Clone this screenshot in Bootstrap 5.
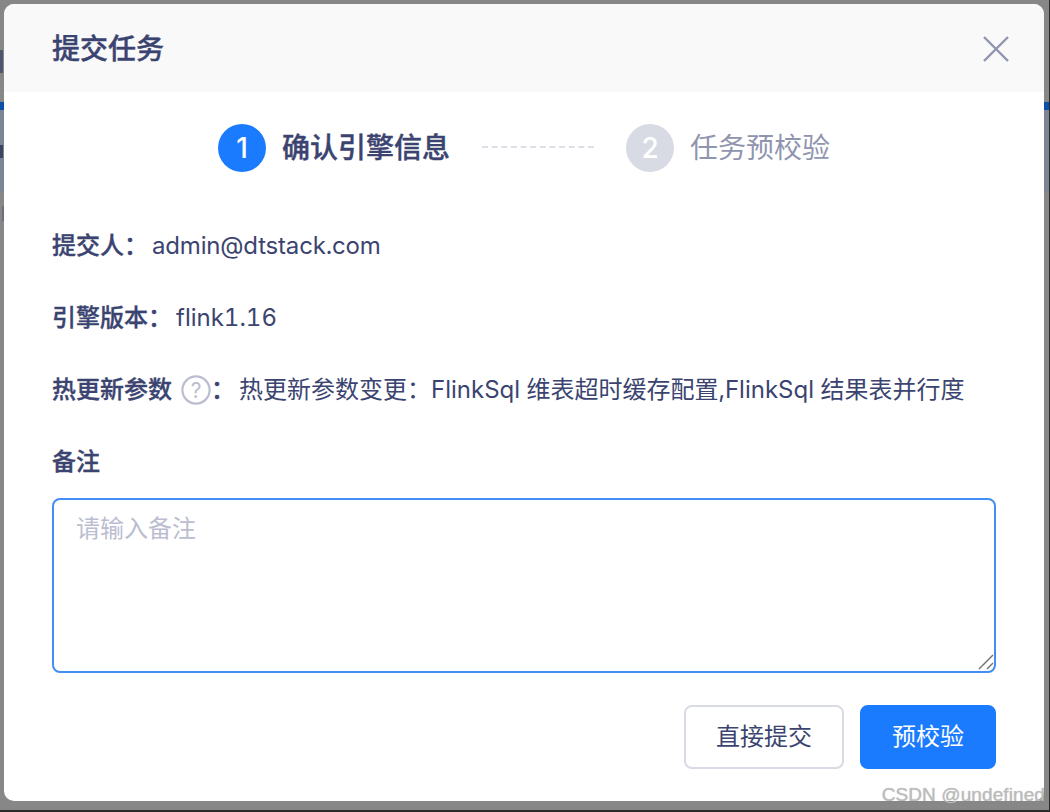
<!doctype html>
<html lang="zh">
<head>
<meta charset="utf-8">
<link href="https://cdn.jsdelivr.net/npm/bootstrap@5.3.0/dist/css/bootstrap.min.css" rel="stylesheet">
<style>
html,body{height:812px;overflow:hidden}
body{background:#878787;font-family:Inter,"Noto Sans CJK SC",sans-serif;color:#3b4470;font-size:24px;position:relative}
.back-blue{position:absolute;left:0;right:0;top:102px;height:8px;background:#0d4ea6}
.back-panel{position:absolute;left:0;right:0;top:110px;height:82px;background:#7b8594}
.back-glyph{position:absolute;background:#4f5670;width:3px}
.glyph-a{left:0;top:50px;height:23px}
.glyph-b{left:0;top:145px;height:13px;background:#3c4560}
.glyph-c{left:2px;top:206px;height:15px;background:#6c6f82}
.edge-line{position:absolute;left:0;right:0;bottom:0;height:2px;background:#2b2b2b}
.edge-side{position:absolute;right:0;top:0;bottom:0;width:1px;background:#2b2b2b}
.dialog-box{position:absolute;left:4px;top:4px;width:1040px;height:797px;background:#fff;border-radius:10px;overflow:hidden;display:flex;flex-direction:column}
.dialog-head{height:88px;background:#f9f9f9;padding:0 34px 0 48px;flex:none}
.dialog-title{font-size:28px;font-weight:500;line-height:1;margin:2px 0 0;color:#3b4470;-webkit-text-stroke:.4px #3b4470}
.close-x{width:28px;height:28px;display:block;background:none;border:0;padding:0;margin-top:2px}
.close-x svg{display:block}
.dialog-main{padding:32px 48px 0;flex:1;display:flex;flex-direction:column}
.step-row{height:48px;margin-bottom:50px;padding-left:166px}
.step-dot{width:48px;height:48px;border-radius:50%;background:#1a7bff;color:#fff;font-size:28px;font-weight:500;flex:none}
.step-dot-off{background:#d8dbe3}
.step-name{font-size:28px;font-weight:500;margin-left:16px;line-height:48px;white-space:nowrap;-webkit-text-stroke:.4px #3b4470}
.step-off{font-weight:400;color:#9095af;-webkit-text-stroke:0}
.step-dash{width:112px;border-top:2px dashed #dcdfe6;margin:0 32px 3px;height:0}
.info-row{height:48px;line-height:48px;margin-bottom:24px;white-space:nowrap;font-variant-numeric:tabular-nums}
.info-key{font-weight:500;-webkit-text-stroke:.35px #3b4470}
.key-gap{margin-right:4px}
.tight-text{letter-spacing:-.18px}
.help-mark{width:30px;height:30px;display:block;margin:0 0 0 9px;flex:none}
.note-label{font-weight:500;line-height:48px;margin-bottom:12px;font-size:24px;color:#3b4470;-webkit-text-stroke:.35px #3b4470}
.note-wrap{position:relative}
.note-area{height:175px;border:2px solid #438ef4;border-radius:8px;padding:11px 22px;font-size:24px;line-height:36px;color:#3b4470;box-shadow:none;resize:none;display:block}
.note-area::placeholder{color:#bbbdd0}
.note-area:focus{border-color:#438ef4;box-shadow:none}
.grip-mark{position:absolute;right:2px;bottom:3px;width:16px;height:16px;display:block}
.btn-row{margin-top:32px;gap:16px}
.act-btn{height:64px;font-size:24px;border-radius:8px;padding:0 30px;line-height:1}
.act-plain{background:#fff;border:2px solid #d8dbe3;color:#3b4470}
.act-main{background:#1a7bff;border:2px solid #1a7bff;color:#fff}
.mark-text{position:absolute;right:5px;bottom:8px;font-family:"Liberation Sans",sans-serif;font-size:19px;color:#bcbcbc;line-height:1;white-space:nowrap;letter-spacing:.1px;text-shadow:0 0 1px rgba(120,120,120,.5)}
</style>
</head>
<body>
<div class="back-blue"></div>
<div class="back-panel"></div>
<div class="back-glyph glyph-a"></div>
<div class="back-glyph glyph-b"></div>
<div class="back-glyph glyph-c"></div>
<div class="edge-line"></div>
<div class="edge-side"></div>
<div class="dialog-box">
  <div class="dialog-head d-flex align-items-center justify-content-between">
    <h5 class="dialog-title">提交任务</h5>
    <button class="close-x" type="button" aria-label="关闭">
      <svg width="28" height="28" viewBox="0 0 28 28" fill="none" stroke="#9095af" stroke-width="2.4"><path d="M2 2 L26 26 M26 2 L2 26"/></svg>
    </button>
  </div>
  <div class="dialog-main">
    <div class="step-row d-flex align-items-center">
      <span class="step-dot d-flex align-items-center justify-content-center">1</span>
      <span class="step-name">确认引擎信息</span>
      <span class="step-dash"></span>
      <span class="step-dot step-dot-off d-flex align-items-center justify-content-center">2</span>
      <span class="step-name step-off">任务预校验</span>
    </div>
    <div class="info-row"><span class="info-key key-gap">提交人：</span><span class="tight-text">admin@dtstack.com</span></div>
    <div class="info-row"><span class="info-key key-gap">引擎版本：</span>flink1.16</div>
    <div class="info-row d-flex align-items-center">
      <span class="info-key">热更新参数</span>
      <svg class="help-mark" viewBox="0 0 30 30" fill="none"><circle cx="15" cy="15" r="13.6" stroke="#bbbdd0" stroke-width="2.2"/><text x="15" y="22.5" text-anchor="middle" font-size="21" fill="#bbbdd0" font-family="Inter,sans-serif">?</text></svg>
      <span class="info-key key-gap">：</span><span>热更新参数变更：FlinkSql 维表超时缓存配置,FlinkSql 结果表并行度</span>
    </div>
    <div class="note-label">备注</div>
    <div class="note-wrap">
      <textarea class="form-control note-area" placeholder="请输入备注"></textarea>
      <svg class="grip-mark" viewBox="0 0 16 16" fill="none" stroke="#6f6f6f" stroke-width="1.4"><path d="M1 15 L15 1 M9 15 L15 9"/></svg>
    </div>
    <div class="btn-row d-flex justify-content-end">
      <button class="btn act-btn act-plain" type="button">直接提交</button>
      <button class="btn act-btn act-main" type="button">预校验</button>
    </div>
  </div>
</div>
<div class="mark-text">CSDN @undefined</div>
<script src="https://cdn.jsdelivr.net/npm/bootstrap@5.3.0/dist/js/bootstrap.bundle.min.js"></script>
</body>
</html>
